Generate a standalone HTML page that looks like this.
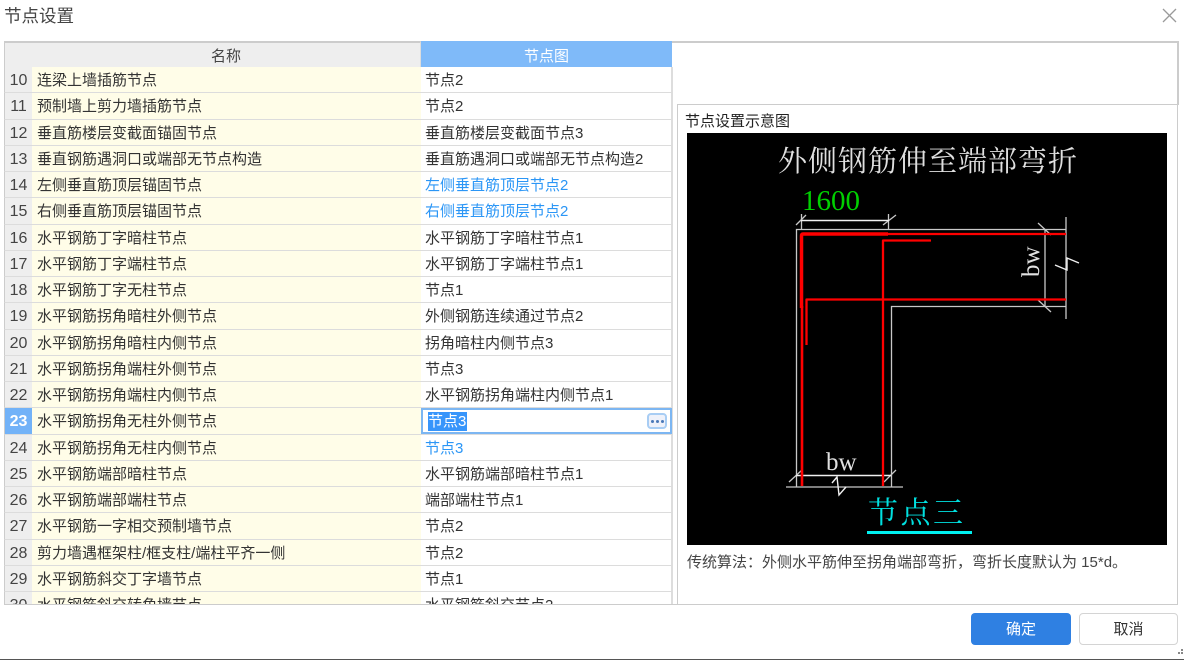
<!DOCTYPE html>
<html lang="zh">
<head>
<meta charset="utf-8">
<title>节点设置</title>
<style>
html,body{margin:0;padding:0;background:#fff;}
body{width:1184px;height:660px;position:relative;overflow:hidden;font-family:"Liberation Sans","Noto Sans CJK SC",sans-serif;color:#444;font-size:15px;}
.a{position:absolute;}
#wrap{position:absolute;left:0;top:0;width:1184px;height:660px;filter:blur(.35px);}
.title{left:4px;top:5px;font-size:17.5px;line-height:22px;color:#444;white-space:nowrap;}
#grid{left:4px;top:41px;width:669px;height:563px;overflow:hidden;background:#fff;}
.hd{position:absolute;top:0;height:25px;line-height:27px;text-align:center;background:#eee;border-top:2px solid #ccc;border-bottom:0;box-sizing:content-box;}
.row{position:absolute;left:0;width:668px;height:26.25px;}
.row div{position:absolute;top:0;height:25.25px;line-height:28px;white-space:nowrap;border-bottom:1px solid #dcdcdc;}
.i{left:0;width:27px;text-align:center;background:#eee;border-left:1px solid #ccc;border-right:1px solid #ddd;color:#444;font-size:16px;}
.n{left:28px;width:384px;padding-left:5px;background:#fffde8;color:#333;border-right:1px solid #ddd;}
.v{left:417px;width:246px;padding-left:4px;background:#fff;color:#333;border-right:2px solid #ddd;}
.blue{color:#2b96f6 !important;}
</style>
</head>
<body>
<div id="wrap">
<div class="a title">节点设置</div>
<svg class="a" style="left:1162px;top:8px" width="15" height="15" viewBox="0 0 15 15"><path d="M1 1L14 14M14 1L1 14" stroke="#9a9a9a" stroke-width="1.3" fill="none"/></svg>

<div id="grid" class="a">
  <div class="hd" style="left:0;width:27px;border-left:1px solid #ccc;border-right:1px solid #ddd"></div>
  <div class="hd" style="left:28px;width:388px;border-right:1px solid #ddd;color:#444">名称</div>
  <div class="hd" style="left:417px;width:251px;background:#7fbaf9;border-top-color:#7fbaf9;color:#fff">节点图</div>

  <div class="row" style="top:26px"><div class="i">10</div><div class="n">连梁上墙插筋节点</div><div class="v">节点2</div></div>
  <div class="row" style="top:52.25px"><div class="i">11</div><div class="n">预制墙上剪力墙插筋节点</div><div class="v">节点2</div></div>
  <div class="row" style="top:78.5px"><div class="i">12</div><div class="n">垂直筋楼层变截面锚固节点</div><div class="v">垂直筋楼层变截面节点3</div></div>
  <div class="row" style="top:104.75px"><div class="i">13</div><div class="n">垂直钢筋遇洞口或端部无节点构造</div><div class="v">垂直筋遇洞口或端部无节点构造2</div></div>
  <div class="row" style="top:131px"><div class="i">14</div><div class="n">左侧垂直筋顶层锚固节点</div><div class="v blue">左侧垂直筋顶层节点2</div></div>
  <div class="row" style="top:157.25px"><div class="i">15</div><div class="n">右侧垂直筋顶层锚固节点</div><div class="v blue">右侧垂直筋顶层节点2</div></div>
  <div class="row" style="top:183.5px"><div class="i">16</div><div class="n">水平钢筋丁字暗柱节点</div><div class="v">水平钢筋丁字暗柱节点1</div></div>
  <div class="row" style="top:209.75px"><div class="i">17</div><div class="n">水平钢筋丁字端柱节点</div><div class="v">水平钢筋丁字端柱节点1</div></div>
  <div class="row" style="top:236px"><div class="i">18</div><div class="n">水平钢筋丁字无柱节点</div><div class="v">节点1</div></div>
  <div class="row" style="top:262.25px"><div class="i">19</div><div class="n">水平钢筋拐角暗柱外侧节点</div><div class="v">外侧钢筋连续通过节点2</div></div>
  <div class="row" style="top:288.5px"><div class="i">20</div><div class="n">水平钢筋拐角暗柱内侧节点</div><div class="v">拐角暗柱内侧节点3</div></div>
  <div class="row" style="top:314.75px"><div class="i">21</div><div class="n">水平钢筋拐角端柱外侧节点</div><div class="v">节点3</div></div>
  <div class="row" style="top:341px"><div class="i">22</div><div class="n">水平钢筋拐角端柱内侧节点</div><div class="v">水平钢筋拐角端柱内侧节点1</div></div>
  <div class="row" style="top:367.25px"><div class="i" style="background:#72b2f8;color:#fff;font-weight:bold">23</div><div class="n">水平钢筋拐角无柱外侧节点</div><div class="v"></div></div>
  <div class="row" style="top:393.5px"><div class="i">24</div><div class="n">水平钢筋拐角无柱内侧节点</div><div class="v blue">节点3</div></div>
  <div class="row" style="top:419.75px"><div class="i">25</div><div class="n">水平钢筋端部暗柱节点</div><div class="v">水平钢筋端部暗柱节点1</div></div>
  <div class="row" style="top:446px"><div class="i">26</div><div class="n">水平钢筋端部端柱节点</div><div class="v">端部端柱节点1</div></div>
  <div class="row" style="top:472.25px"><div class="i">27</div><div class="n">水平钢筋一字相交预制墙节点</div><div class="v">节点2</div></div>
  <div class="row" style="top:498.5px"><div class="i">28</div><div class="n">剪力墙遇框架柱/框支柱/端柱平齐一侧</div><div class="v">节点2</div></div>
  <div class="row" style="top:524.75px"><div class="i">29</div><div class="n">水平钢筋斜交丁字墙节点</div><div class="v">节点1</div></div>
  <div class="row" style="top:551px"><div class="i">30</div><div class="n">水平钢筋斜交转角墙节点</div><div class="v">水平钢筋斜交节点2</div></div>
</div>

<!-- editing cell -->
<div class="a" style="left:421px;top:408px;width:251px;height:26px;box-sizing:border-box;border:2px solid #7cb6f2;background:#fff"></div>
<div class="a" style="left:428px;top:412px;width:39px;height:19px;background:#3795fb;color:#fff;line-height:20px;white-space:nowrap">节点3</div>
<div class="a" style="left:647px;top:413px;width:20px;height:16px;box-sizing:border-box;border:2px solid #a8cdf4;border-radius:4px;background:#eef1fa"></div>
<div class="a" style="left:651px;top:420px;width:3px;height:3px;background:#4a78b8;border-radius:50%"></div>
<div class="a" style="left:656px;top:420px;width:3px;height:3px;background:#4a78b8;border-radius:50%"></div>
<div class="a" style="left:661px;top:420px;width:3px;height:3px;background:#4a78b8;border-radius:50%"></div>

<!-- upper right box and panel -->
<div class="a" style="left:672px;top:41px;width:506px;height:1.5px;background:#ccc"></div>
<div class="a" style="left:1177px;top:41px;width:1.5px;height:64px;background:#ccc"></div>
<div class="a" style="left:677px;top:104px;width:501px;height:500px;box-sizing:border-box;border:1.5px solid #ccc;border-bottom:0"></div>
<div class="a" style="left:685px;top:112px;line-height:20px;color:#222;white-space:nowrap">节点设置示意图</div>

<!-- diagram -->
<svg class="a" style="left:687px;top:133px" width="480" height="412" viewBox="687 133 480 412">
  <rect x="687" y="133" width="480" height="412" fill="#000"/>
  <g fill="none" stroke="#c8c8c8" stroke-width="1.3">
    <path d="M796.5 487V229.5H1066"/>
    <path d="M891.5 487V306.5H1066"/>
    <path d="M1066 217V319"/>
    <path d="M1045 229V307"/>
    <path d="M786 487H903"/>
    <path d="M1038 223L1051 235M1038 300L1051 312"/>
    <path d="M796 225L806 215M883 225L896 215"/>
    <path d="M789 482L802 470M884 482L896 470"/>
    <path d="M801.5 214V229M888.5 214V229"/>
  </g>
  <g fill="none" stroke="#f0f0f0" stroke-width="1.4">
    <path d="M801 220.5H889"/>
    <path d="M796 475.5H891"/>
    <path d="M1055 265L1067 270V258L1079 263"/>
    <path d="M832 483L837 477L839 495L846 487"/>
  </g>
  <g fill="none" stroke="#f00" stroke-linejoin="round">
    <path d="M801.5 308V236Q801.5 234 803 234H888" stroke-width="3.5"/>
    <path d="M888 234H1066" stroke-width="2.3"/>
    <path d="M802 306V486" stroke-width="2.6"/>
    <path d="M883 486V240.5H931" stroke-width="2.3"/>
    <path d="M806.5 345V299.5H1066" stroke-width="2.3"/>
  </g>
  <text x="778" y="171" font-family="'Noto Serif CJK SC','Noto Sans CJK SC',serif" font-size="29" letter-spacing="1" fill="#e0e0e0">外侧钢筋伸至端部弯折</text>
  <text x="802" y="210" font-family="'Liberation Serif',serif" font-size="29" fill="#00d000">1600</text>
  <text x="826" y="470" font-family="'Liberation Serif',serif" font-size="25" fill="#e0e0e0">bw</text>
  <text transform="translate(1039 277) rotate(-90)" font-family="'Liberation Serif',serif" font-size="25" fill="#e0e0e0">bw</text>
  <text x="868" y="523" font-family="'Noto Serif CJK SC','Noto Sans CJK SC',serif" font-size="30" letter-spacing="2.5" fill="#00e0e0">节点三</text>
  <rect x="867" y="531" width="105" height="3" fill="#00f0f0"/>
</svg>

<div class="a" style="left:687px;top:553px;line-height:20px;font-size:15px;color:#444;white-space:nowrap">传统算法：外侧水平筋伸至拐角端部弯折，弯折长度默认为 15*d。</div>

<!-- footer -->
<div class="a" style="left:4px;top:603.5px;width:1174px;height:1.5px;background:#ccc"></div>
<div class="a" style="left:971px;top:613px;width:100px;height:32px;background:#2f80e2;border-radius:4px;color:#fff;text-align:center;line-height:34px">确定</div>
<div class="a" style="left:1079px;top:613px;width:99px;height:32px;box-sizing:border-box;background:#fff;border:1px solid #d4d4d4;border-radius:4px;color:#333;text-align:center;line-height:32px">取消</div>
<div class="a" style="left:1181px;top:649px;width:2px;height:2px;background:#888"></div>
<div class="a" style="left:1178px;top:652px;width:2px;height:2px;background:#888"></div>
<div class="a" style="left:1181px;top:652px;width:2px;height:2px;background:#888"></div>
<div class="a" style="left:0;top:659px;width:1184px;height:1px;background:#555"></div>
</div>
</body>
</html>
